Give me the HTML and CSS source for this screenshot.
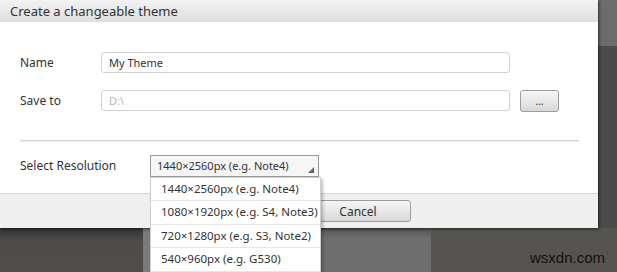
FILE: index.html
```html
<!DOCTYPE html>
<html lang="en">
<head>
  <meta charset="UTF-8">
  <title>Create a changeable theme</title>
  <link rel="stylesheet" href="styles.css">
</head>
<body>
  <div class="screen">
    <div class="top">
      <div class="dialog">
        <div class="title">Create a changeable theme</div>

        <div class="body">
          <div class="row">
            <span class="label">Name</span>
            <div class="input">My Theme</div>
          </div>
          <div class="row">
            <span class="label">Save to</span>
            <div class="input placeholder">D:\</div>
            <button class="btn btn-browse">...</button>
          </div>

          <div class="divider"></div>

          <div class="row row-select">
            <span class="label">Select Resolution</span>
            <div class="select">
              <span class="select-value">1440×2560px (e.g. Note4)</span>
              <svg class="arrow" width="6" height="6" viewBox="0 0 6 6"><polygon points="6,0 6,6 0,6" fill="#666"/></svg>
              <ul class="options">
                <li>1440×2560px (e.g. Note4)</li>
                <li>1080×1920px (e.g. S4, Note3)</li>
                <li>720×1280px (e.g. S3, Note2)</li>
                <li>540×960px (e.g. G530)</li>
              </ul>
            </div>
          </div>
        </div>

        <div class="footer">
          <button class="btn btn-cancel">Cancel</button>
        </div>
      </div>
      <div class="side">
        <div class="side-top"></div>
        <div class="side-bottom"></div>
      </div>
    </div>

    <div class="bottom">
      <div class="seg seg-a"></div>
      <div class="seg seg-b"></div>
      <div class="seg seg-c"></div>
      <div class="seg seg-d"></div>
      <div class="seg seg-e">
        <span class="watermark">wsxdn.com</span>
      </div>
    </div>
  </div>
</body>
</html>
```

FILE: styles.css
```css
body {
  margin: 0;
  font-family: "Noto Sans", "Open Sans", sans-serif;
  font-size: 12px;
  color: #333;
  background: #555452;
}
.screen {
  width: 617px;
  height: 272px;
  overflow: hidden;
  display: flex;
  flex-direction: column;
}
.top {
  display: flex;
  height: 228px;
}
.dialog {
  width: 598px;
  display: flex;
  flex-direction: column;
  background: #fff;
  box-shadow: 1px 1px 3px rgba(0, 0, 0, 0.6);
  position: relative;
  z-index: 2;
}
.title {
  height: 22px;
  line-height: 22px;
  padding-left: 10px;
  background: linear-gradient(#f3f3f3, #dedede);
  font-size: 13px;
  color: #333;
}
.body {
  flex: 1;
  padding: 30px 0 0 20px;
}
.row {
  display: flex;
  align-items: center;
  height: 21px;
  margin-bottom: 17px;
}
.label {
  width: 81px;
  flex-shrink: 0;
  font-size: 12px;
  color: #333;
}
.input {
  width: 400px;
  height: 19px;
  line-height: 19px;
  padding-left: 7px;
  border: 1px solid #d2d2d2;
  border-radius: 3px;
  background: #fff;
  font-size: 11px;
  color: #333;
}
.placeholder {
  color: #b5b5b5;
}
.btn {
  font-family: inherit;
  border: 1px solid #9d9d9d;
  border-radius: 3px;
  background: linear-gradient(#f7f7f7, #d9d9d9);
  color: #333;
  padding: 0;
  cursor: pointer;
}
.btn-browse {
  width: 39px;
  height: 22px;
  margin-left: 10px;
  font-size: 10px;
  line-height: 1;
}
.divider {
  height: 1px;
  margin: 29px 19px 0 0;
  background: #d6d6d6;
  box-shadow: 0 1px 0 #eee;
}
.row-select {
  margin-top: 14px;
}
.row-select .label {
  width: 130px;
}
.select {
  position: relative;
  box-sizing: border-box;
  width: 169px;
  height: 22px;
  line-height: 20px;
  padding-left: 6px;
  border: 1px solid #9a9a9a;
  background: #f6f6f6;
  font-size: 11px;
  color: #333;
}
.arrow {
  position: absolute;
  right: 4px;
  bottom: 3px;
}
.options {
  position: absolute;
  top: 21px;
  left: -1px;
  width: 169px;
  margin: 0;
  padding: 0;
  list-style: none;
  background: #fff;
  border: 1px solid #cfcfcf;
  box-shadow: 2px 2px 3px rgba(0, 0, 0, 0.25);
  z-index: 5;
}
.options li {
  height: 22.5px;
  line-height: 22.5px;
  padding-left: 10px;
  border-bottom: 1px solid #e6e6e6;
  font-size: 11.5px;
  color: #333;
  white-space: nowrap;
}
.footer {
  height: 34px;
  border-top: 1px solid #d6d6d6;
  background: #efeff0;
  display: flex;
  align-items: center;
  padding-left: 305px;
}
.btn-cancel {
  width: 106px;
  height: 22px;
  font-size: 12px;
}
.side {
  width: 19px;
  display: flex;
  flex-direction: column;
}
.side-top {
  height: 46px;
  background: #6c6c6c;
}
.side-bottom {
  flex: 1;
  background: #4b4b4b;
}
.bottom {
  flex: 1;
  display: flex;
}
.seg-a {
  width: 143px;
  background: linear-gradient(#333, #4d4c4a 30%, #4f4e4c);
}
.seg-b {
  width: 7px;
  background: #7a7a7a;
}
.seg-c {
  width: 169px;
  background: #6e6e6e;
}
.seg-d {
  width: 112px;
  background: linear-gradient(#555, #6f6f6f 25%, #6e6e6e);
}
.seg-e {
  flex: 1;
  background: #565451;
  display: flex;
  align-items: flex-end;
  justify-content: flex-end;
  padding: 0 12px 6px 0;
}
.watermark {
  font-family: "Liberation Sans", Arial, sans-serif;
  font-size: 15px;
  color: #111;
}
```
